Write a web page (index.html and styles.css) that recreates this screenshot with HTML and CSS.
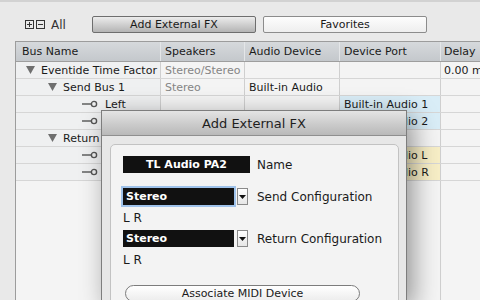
FILE: index.html
```html
<!DOCTYPE html>
<html lang="en">
<head>
  <meta charset="UTF-8" />
  <title>Add External FX</title>
  <link rel="stylesheet" href="styles.css">
</head>
<body>
<div class="toolbar">
  <div class="expand">
    <svg width="21" height="9" viewBox="0 0 21 9">
      <rect x="0.5" y="0.5" width="8" height="8" fill="none" stroke="#333"/>
      <path d="M2 4.5h5M4.5 2v5" stroke="#333"/>
      <rect x="11.5" y="0.5" width="8" height="8" fill="none" stroke="#333"/>
      <path d="M13 4.5h5" stroke="#333"/>
    </svg>
    <span>All</span>
  </div>
  <button class="tab tab-active">Add External FX</button>
  <button class="tab">Favorites</button>
</div>

<div class="grid">
  <div class="row head">
    <div class="cell">Bus Name</div>
    <div class="cell">Speakers</div>
    <div class="cell">Audio Device</div>
    <div class="cell">Device Port</div>
    <div class="cell">Delay</div>
  </div>
  <div class="row">
    <div class="cell name lvl1"><svg class="tri" width="9" height="8" viewBox="0 0 9 8"><path d="M0 0h9L4.5 8z"/></svg>Eventide Time Factor</div>
    <div class="cell dim">Stereo/Stereo</div>
    <div class="cell"></div>
    <div class="cell"></div>
    <div class="cell">0.00 ms</div>
  </div>
  <div class="row">
    <div class="cell name lvl2"><svg class="tri" width="9" height="8" viewBox="0 0 9 8"><path d="M0 0h9L4.5 8z"/></svg>Send Bus 1</div>
    <div class="cell dim">Stereo</div>
    <div class="cell">Built-in Audio</div>
    <div class="cell"></div>
    <div class="cell"></div>
  </div>
  <div class="row">
    <div class="cell name lvl3"><svg class="plug" width="16" height="8" viewBox="0 0 16 8"><path d="M0 4h9" stroke="#555" stroke-width="1.4"/><circle cx="12" cy="4" r="2.6" fill="none" stroke="#555" stroke-width="1.4"/></svg>Left</div>
    <div class="cell"></div>
    <div class="cell"></div>
    <div class="cell send">Built-in Audio 1</div>
    <div class="cell"></div>
  </div>
  <div class="row">
    <div class="cell name lvl3"><svg class="plug" width="16" height="8" viewBox="0 0 16 8"><path d="M0 4h9" stroke="#555" stroke-width="1.4"/><circle cx="12" cy="4" r="2.6" fill="none" stroke="#555" stroke-width="1.4"/></svg>Right</div>
    <div class="cell"></div>
    <div class="cell"></div>
    <div class="cell send">Built-in Audio 2</div>
    <div class="cell"></div>
  </div>
  <div class="row">
    <div class="cell name lvl2"><svg class="tri" width="9" height="8" viewBox="0 0 9 8"><path d="M0 0h9L4.5 8z"/></svg>Return Bus 1</div>
    <div class="cell dim">Stereo</div>
    <div class="cell">Built-in Audio</div>
    <div class="cell"></div>
    <div class="cell"></div>
  </div>
  <div class="row">
    <div class="cell name lvl3"><svg class="plug" width="16" height="8" viewBox="0 0 16 8"><path d="M0 4h9" stroke="#555" stroke-width="1.4"/><circle cx="12" cy="4" r="2.6" fill="none" stroke="#555" stroke-width="1.4"/></svg>Left</div>
    <div class="cell"></div>
    <div class="cell"></div>
    <div class="cell ret">Built-in Audio L</div>
    <div class="cell"></div>
  </div>
  <div class="row">
    <div class="cell name lvl3"><svg class="plug" width="16" height="8" viewBox="0 0 16 8"><path d="M0 4h9" stroke="#555" stroke-width="1.4"/><circle cx="12" cy="4" r="2.6" fill="none" stroke="#555" stroke-width="1.4"/></svg>Right</div>
    <div class="cell"></div>
    <div class="cell"></div>
    <div class="cell ret">Built-in Audio R</div>
    <div class="cell"></div>
  </div>
  <div class="row filler">
    <div class="cell"></div>
    <div class="cell"></div>
    <div class="cell"></div>
    <div class="cell"></div>
    <div class="cell"></div>
  </div>
</div>

<div class="dialog">
  <div class="titlebar">Add External FX</div>
  <div class="dialog-body">
    <div class="group">
      <div class="field-row">
        <div class="field name-field">TL Audio PA2</div>
        <span class="label">Name</span>
      </div>
      <div class="field-row gap-send">
        <div class="field select focused">Stereo</div>
        <div class="arrow"><svg width="7" height="4" viewBox="0 0 7 4"><path d="M0 0h7L3.5 4z"/></svg></div>
        <span class="label">Send Configuration</span>
      </div>
      <div class="channels">L R</div>
      <div class="field-row gap-return">
        <div class="field select">Stereo</div>
        <div class="arrow"><svg width="7" height="4" viewBox="0 0 7 4"><path d="M0 0h7L3.5 4z"/></svg></div>
        <span class="label">Return Configuration</span>
      </div>
      <div class="channels">L R</div>
      <button class="pill">Associate MIDI Device</button>
    </div>
  </div>
</div>
</body>
</html>
```

FILE: styles.css
```css
* {
  margin: 0;
  padding: 0;
  box-sizing: border-box;
}
body {
  width: 480px;
  height: 300px;
  overflow: hidden;
  position: relative;
  background: #e9e9e9;
  border-top: 2px solid #d2d2d2;
  font-family: "DejaVu Sans", sans-serif;
  font-size: 11px;
  color: #1a1a1a;
}
.toolbar {
  display: flex;
  align-items: center;
  height: 17px;
  margin-top: 14px;
  padding-left: 25px;
}
.expand {
  display: flex;
  align-items: center;
  gap: 5px;
  width: 67px;
  font-size: 12px;
  color: #333;
}
.tab {
  height: 17px;
  width: 164px;
  border: 1px solid #8c8c8c;
  border-radius: 2px;
  background: linear-gradient(#fdfdfd, #eeeeee);
  font-family: "DejaVu Sans", sans-serif;
  font-size: 11px;
  color: #1a1a1a;
}
.tab-active {
  margin-right: 7px;
  border-color: #6e6e6e;
  background: linear-gradient(#ececec, #cdcdcd 55%, #b4b4b4);
}
.grid {
  margin: 8px 0 0 15px;
  width: 465px;
  height: 259px;
  overflow: hidden;
  border-top: 1px solid #9c9c9c;
  border-left: 1px solid #9c9c9c;
}
.row {
  display: grid;
  grid-template-columns: 145px 84px 95px 101px 1fr;
  height: 17px;
  border-bottom: 1px solid #d6d6d6;
  background: #f4f4f4;
}
.cell {
  display: flex;
  align-items: center;
  padding-left: 4px;
  border-right: 1px solid #cfcfcf;
  white-space: nowrap;
  overflow: hidden;
}
.head {
  height: 20px;
  background: linear-gradient(#d6d9dc, #c4c8cc);
  border-bottom: 1px solid #9e9e9e;
}
.head .cell {
  border-right-color: #e4e6e8;
}
.head .cell:first-child {
  padding-left: 6px;
}
.head .cell:last-child {
  padding-left: 6px;
}
.row .cell:last-child {
  padding-left: 3px;
  border-right: none;
}
.name {
  background: #eff0f1;
}
.lvl1 { padding-left: 10px; }
.lvl2 { padding-left: 32px; }
.lvl3 { padding-left: 66px; }
.tri {
  fill: #6f6f6f;
  margin-right: 6px;
}
.plug {
  margin-right: 7px;
}
.dim {
  color: #858585;
}
.send {
  background: #d9edf7;
}
.ret {
  background: #f7eec6;
}
.filler {
  height: 120px;
  border-bottom: none;
}
.dialog {
  position: absolute;
  left: 101px;
  top: 108px;
  width: 306px;
  height: 192px;
  overflow: hidden;
  border: 1px solid #7d7d7d;
  border-bottom: none;
  background: #e7e7e7;
  box-shadow: 6px 6px 24px rgba(0, 0, 0, 0.4);
}
.titlebar {
  height: 25px;
  display: flex;
  align-items: center;
  justify-content: center;
  background: linear-gradient(#e4e4e4, #c9c9c9 60%, #b9b9b9);
  border-bottom: 1px solid #8f8f8f;
  font-size: 13px;
  color: #1e1e1e;
}
.dialog-body {
  padding: 8px 7px 0 8px;
}
.group {
  height: 200px;
  border: 1px solid #c2c2c2;
  border-radius: 5px;
  background: #f3f3f3;
  padding: 11px 0 0 12px;
  font-size: 12px;
}
.field-row {
  display: flex;
  align-items: center;
  height: 17px;
}
.field {
  height: 17px;
  display: flex;
  align-items: center;
  background: #111;
  color: #fff;
  font-size: 11px;
  font-weight: bold;
}
.name-field {
  width: 127px;
  justify-content: center;
}
.select {
  width: 111px;
  padding-left: 3px;
}
.focused {
  box-shadow: 0 0 0 2px #9fc2ea;
}
.arrow {
  width: 11px;
  height: 17px;
  margin-left: 3px;
  display: flex;
  align-items: center;
  justify-content: center;
  background: linear-gradient(#ffffff, #e6e6e6);
  border: 1px solid #8a8a8a;
  fill: #111;
}
.label {
  margin-left: 7px;
  color: #1a1a1a;
}
.arrow + .label {
  margin-left: 9px;
}
.gap-send {
  margin-top: 15px;
}
.gap-return {
  margin-top: 5px;
}
.channels {
  height: 14px;
  margin-top: 6px;
  line-height: 14px;
  color: #1a1a1a;
}
.pill {
  display: block;
  margin: 18px 0 0 2px;
  width: 235px;
  height: 17px;
  border: 1px solid #7c7c7c;
  border-radius: 9px;
  background: linear-gradient(#ffffff, #ececec);
  font-family: "DejaVu Sans", sans-serif;
  font-size: 11px;
  color: #1a1a1a;
}
```
